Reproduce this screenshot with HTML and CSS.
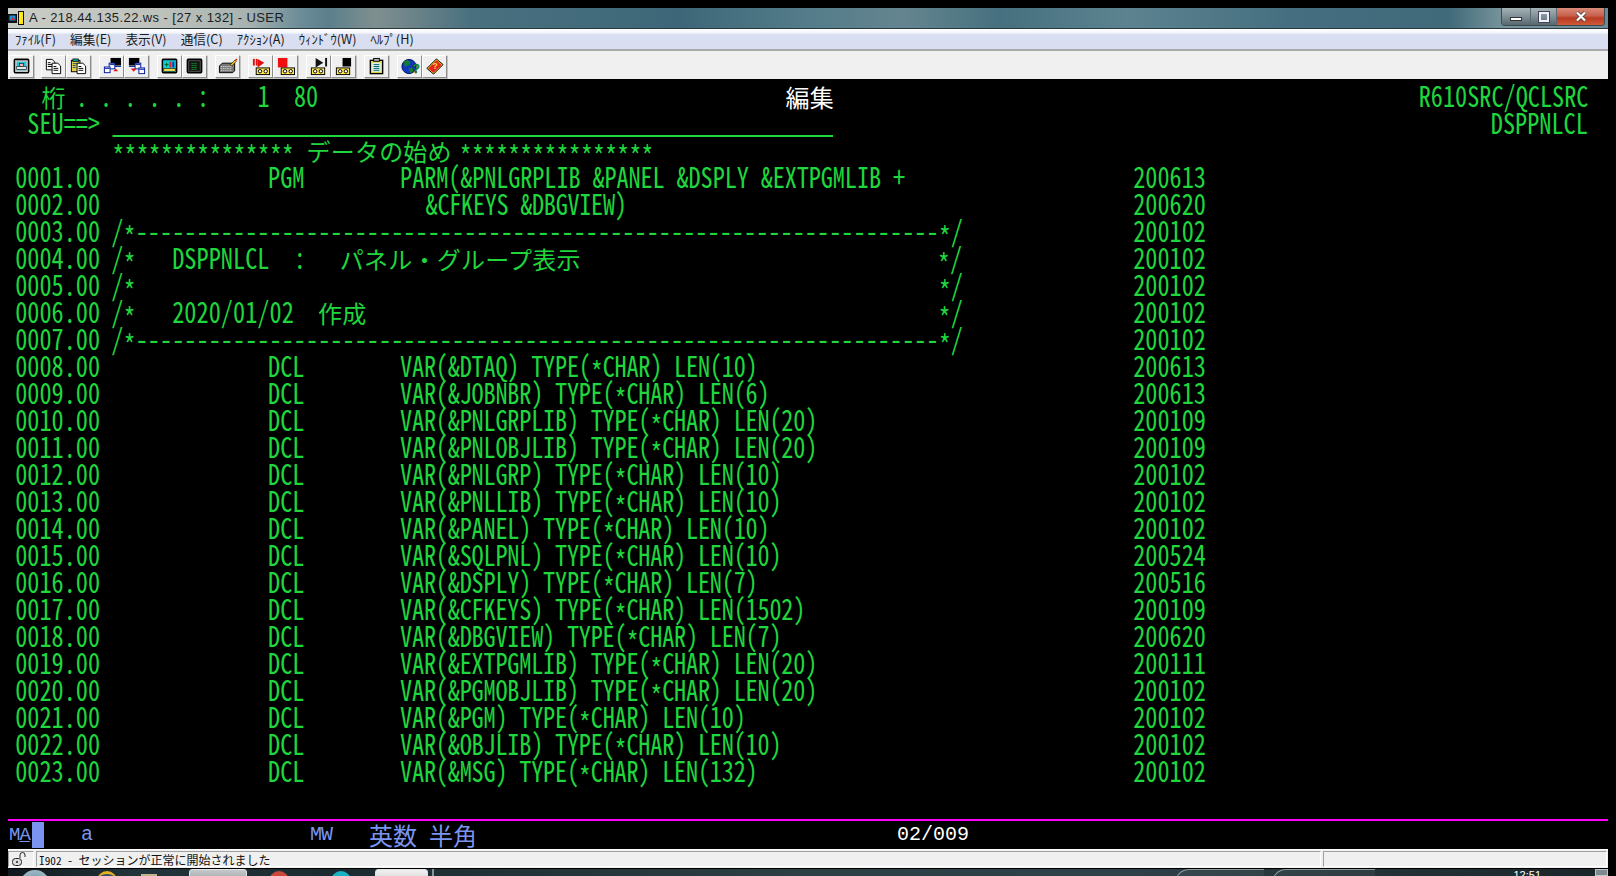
FILE: index.html
```html
<!DOCTYPE html>
<html lang="ja">
<head>
<meta charset="utf-8">
<title>A - 218.44.135.22.ws - [27 x 132] - USER</title>
<link rel="stylesheet" href="styles.css">
</head>
<body>
<svg class="defs" width="0" height="0">
  <defs>
    <g id="tape">
      <rect x="6.500" y="11.500" width="14" height="7" fill="#ffe94a" stroke="#000"/>
      <circle cx="10.500" cy="15" r="1.800" fill="#fff" stroke="#000"/>
      <circle cx="16.500" cy="15" r="1.800" fill="#fff" stroke="#000"/>
    </g>
    <g id="doc">
      <path d="M.5.5h6l3 3v8H.5z" fill="#fff" stroke="#000"/>
      <path d="M2 4h3M2 6h5M2 8h5" stroke="#000" fill="none"/>
    </g>
    <g id="win">
      <rect x=".5" y=".5" width="6" height="6" fill="#fff" stroke="#00189c"/>
      <path d="M1 2h5" stroke="#00189c"/>
    </g>
  </defs>
</svg>
<div class="window">
  <header class="titlebar">
    <svg class="app-icon" width="18" height="18" viewBox="0 0 18 18"><rect x="0" y="5" width="9" height="9" fill="#111"/><rect x="1.500" y="6.500" width="6" height="5" fill="#1c8fd8"/><path d="M3 11l2-3 2 3z" fill="#e02020"/><rect x="10" y="2" width="6" height="14" fill="#111"/><rect x="11" y="3" width="4" height="12" fill="#ffe81f"/></svg>
    <span class="title-text">A - 218.44.135.22.ws - [27 x 132] - USER</span>
    <div class="caption">
      <span class="cap cap-min"><i class="min-glyph"></i></span>
      <span class="cap cap-max"><i class="max-glyph"></i></span>
      <span class="cap cap-close">
        <svg width="14" height="11" viewBox="0 0 14 11"><path d="M3 1.500l8 8M11 1.500l-8 8" stroke="#333" stroke-width="3.600" fill="none"/><path d="M3 1.500l8 8M11 1.500l-8 8" stroke="#fff" stroke-width="2.400" fill="none"/></svg>
      </span>
    </div>
  </header>
  <nav class="menubar">
    <span class="menu-item">ﾌｧｲﾙ(F)</span>
    <span class="menu-item">編集(E)</span>
    <span class="menu-item">表示(V)</span>
    <span class="menu-item">通信(C)</span>
    <span class="menu-item">ｱｸｼｮﾝ(A)</span>
    <span class="menu-item">ｳｨﾝﾄﾞｳ(W)</span>
    <span class="menu-item">ﾍﾙﾌﾟ(H)</span>
  </nav>
  <div class="toolbar">
    <div class="tool-group tool-first">
      <button class="tool"><svg viewBox="0 0 22 20"><rect x="3.500" y="2.500" width="15" height="14" rx="1" fill="#c8c8c8" stroke="#000" stroke-width="1.600"/><rect x="6" y="5" width="10" height="9" fill="#14c8d8"/><rect x="9" y="7" width="4" height="3" fill="#f8b0c0" stroke="#000" stroke-width=".6"/><rect x="6" y="10" width="10" height="3" fill="#e8e8e8" stroke="#000" stroke-width=".6"/></svg></button>
    </div>
    <div class="tool-group">
      <button class="tool"><svg viewBox="0 0 22 20"><use href="#doc" x="3" y="2"/><use href="#doc" x="9" y="6"/></svg></button>
      <button class="tool"><svg viewBox="0 0 22 20"><rect x="3.500" y="3.500" width="9" height="12" fill="#e8d04a" stroke="#000"/><rect x="5" y="2" width="6" height="3" fill="#0a8a8a" stroke="#000" stroke-width=".6"/><path d="M5 7h6M5 9h3M5 11h3" stroke="#0a5a8a"/><use href="#doc" x="9" y="6"/></svg></button>
    </div>
    <div class="tool-group">
      <button class="tool"><svg viewBox="0 0 22 20"><rect x="10" y="1" width="11" height="8" fill="#000"/><path d="M10 10h11" stroke="#1030a0"/><use href="#win" x="8" y="6"/><use href="#win" x="3" y="10"/><path d="M13 15h5l-2.500-3z" fill="#e81010"/></svg></button>
      <button class="tool"><svg viewBox="0 0 22 20"><rect x="3" y="1" width="11" height="8" fill="#000"/><path d="M3 10h11" stroke="#1030a0"/><use href="#win" x="9" y="6"/><use href="#win" x="13" y="11"/><path d="M5 12h6l-3 3.500z" fill="#e81010"/></svg></button>
    </div>
    <div class="tool-group">
      <button class="tool"><svg viewBox="0 0 22 20"><rect x="3.500" y="2.500" width="15" height="14" rx="1" fill="#14c8d8" stroke="#000" stroke-width="1.600"/><path d="M6 8h4M8 6v4" stroke="#006000"/><rect x="11" y="5" width="2" height="6" fill="#e02020"/><rect x="14" y="5" width="2" height="6" fill="#1030c0"/><rect x="5" y="12" width="12" height="3" fill="#f0e050" stroke="#000" stroke-width=".6"/></svg></button>
      <button class="tool"><svg viewBox="0 0 22 20"><rect x="3.500" y="2.500" width="15" height="14" rx="1" fill="#111" stroke="#000" stroke-width="1.600"/><rect x="5" y="4" width="12" height="11" fill="#101810" stroke="#777" stroke-width=".6"/><path d="M8 7h6M8 9h6M8 11h6M8 13h6" stroke="#20d040" stroke-dasharray="1 1"/></svg></button>
    </div>
    <div class="tool-group">
      <button class="tool"><svg viewBox="0 0 22 20"><path d="M2.500 9.500l3-3h13v8l-2 2h-14z" fill="#777" stroke="#000"/><path d="M4 10h12M4 12h12M4 14h11" stroke="#eee" stroke-dasharray="1 1"/><path d="M14 8l5-5 1.500 1.500-5 5z" fill="#e8c020" stroke="#000" stroke-width=".6"/><path d="M19 3l1.500-1.500 1 1L20 4z" fill="#e02020"/></svg></button>
    </div>
    <div class="tool-group">
      <button class="tool"><svg viewBox="0 0 22 20"><rect x="3" y="2" width="2" height="7" fill="#e01010"/><rect x="6" y="2" width="2" height="7" fill="#e01010"/><path d="M8 2l7 4-7 5z" fill="#e01010"/><use href="#tape"/></svg></button>
      <button class="tool"><svg viewBox="0 0 22 20"><rect x="3" y="1" width="10" height="10" fill="#f01010"/><use href="#tape"/></svg></button>
    </div>
    <div class="tool-group">
      <button class="tool"><svg viewBox="0 0 22 20"><path d="M8 1l8 5-8 5z" fill="#111"/><rect x="18" y="1" width="2" height="9" fill="#111"/><use href="#tape" x="-3"/></svg></button>
      <button class="tool"><svg viewBox="0 0 22 20"><rect x="10" y="1" width="9" height="9" fill="#000"/><use href="#tape" x="-3"/></svg></button>
    </div>
    <div class="tool-group">
      <button class="tool"><svg viewBox="0 0 22 20"><rect x="4.500" y="3.500" width="13" height="14" fill="#e8d84a" stroke="#000" stroke-width="1.400"/><rect x="8" y="1.500" width="6" height="3" fill="#b0b0b0" stroke="#000"/><rect x="6.500" y="6" width="9" height="9.500" fill="#d8f0f0"/><path d="M8 8h6M8 10h6M8 12h6M8 14h6" stroke="#006070"/></svg></button>
    </div>
    <div class="tool-group">
      <button class="tool"><svg viewBox="0 0 22 20"><circle cx="10.500" cy="10" r="7.500" fill="#1038c0" stroke="#001060"/><path d="M5 5l4-2 3 3-2 3-4 1zM10 12l4-1 1 4-3 2z" fill="#108030"/><text class="glyph-q" x="14" y="17">?</text></svg></button>
      <button class="tool"><svg viewBox="0 0 22 20"><path d="M3 12L13 2l7 6-10 10z" fill="#f0d020" stroke="#000"/><path d="M4.500 12L13 3.500l5.500 5L10 16.500z" fill="#e82020"/><text class="glyph-b" x="9" y="13">?</text></svg></button>
    </div>
  </div>

  <main class="terminal">
    <div class="cells">
      <div class="row">  <span class="j n2"><span class="j-in">桁</span></span> . . . . . :    1  80                                       <span class="j n4 white"><span class="j-in">編集</span></span>                                                R610SRC/QCLSRC</div>
      <div class="row"> SEU==&gt; <span class="field"></span>                                                      DSPPNLCL</div>
      <div class="row">        <span class="ast">***************</span> <span class="j n12"><span class="j-in">データの始め</span></span> <span class="ast">****************</span></div>

      <div class="row"><span class="seq">0001.00</span><span class="src"><span class="cmd">PGM</span><span class="stmt stmt-parm">PARM(&amp;PNLGRPLIB &amp;PANEL &amp;DSPLY &amp;EXTPGMLIB +</span></span><span>200613</span></div>
      <div class="row"><span class="seq">0002.00</span><span class="src"><span class="stmt stmt-cont">&amp;CFKEYS &amp;DBGVIEW)</span></span><span>200620</span></div>
      <div class="row"><span class="seq">0003.00</span><span class="src frame">/<span class="ast">*</span>------------------------------------------------------------------<span class="ast">*</span>/</span><span>200102</span></div>
      <div class="row"><span class="seq">0004.00</span><span class="src frame">/<span class="ast">*</span>   DSPPNLCL  :   <span class="j n20"><span class="j-in">パネル・グループ表示</span></span>                             <span class="ast">*</span>/</span><span>200102</span></div>
      <div class="row"><span class="seq">0005.00</span><span class="src frame">/<span class="ast">*</span>                                                                  <span class="ast">*</span>/</span><span>200102</span></div>
      <div class="row"><span class="seq">0006.00</span><span class="src frame">/<span class="ast">*</span>   2020/01/02  <span class="j n4"><span class="j-in">作成</span></span>                                               <span class="ast">*</span>/</span><span>200102</span></div>
      <div class="row"><span class="seq">0007.00</span><span class="src frame">/<span class="ast">*</span>------------------------------------------------------------------<span class="ast">*</span>/</span><span>200102</span></div>
      <div class="row"><span class="seq">0008.00</span><span class="src"><span class="cmd">DCL</span><span class="stmt">VAR(&amp;DTAQ) TYPE(<span class="ast">*</span>CHAR) LEN(10)</span></span><span>200613</span></div>
      <div class="row"><span class="seq">0009.00</span><span class="src"><span class="cmd">DCL</span><span class="stmt">VAR(&amp;JOBNBR) TYPE(<span class="ast">*</span>CHAR) LEN(6)</span></span><span>200613</span></div>
      <div class="row"><span class="seq">0010.00</span><span class="src"><span class="cmd">DCL</span><span class="stmt">VAR(&amp;PNLGRPLIB) TYPE(<span class="ast">*</span>CHAR) LEN(20)</span></span><span>200109</span></div>
      <div class="row"><span class="seq">0011.00</span><span class="src"><span class="cmd">DCL</span><span class="stmt">VAR(&amp;PNLOBJLIB) TYPE(<span class="ast">*</span>CHAR) LEN(20)</span></span><span>200109</span></div>
      <div class="row"><span class="seq">0012.00</span><span class="src"><span class="cmd">DCL</span><span class="stmt">VAR(&amp;PNLGRP) TYPE(<span class="ast">*</span>CHAR) LEN(10)</span></span><span>200102</span></div>
      <div class="row"><span class="seq">0013.00</span><span class="src"><span class="cmd">DCL</span><span class="stmt">VAR(&amp;PNLLIB) TYPE(<span class="ast">*</span>CHAR) LEN(10)</span></span><span>200102</span></div>
      <div class="row"><span class="seq">0014.00</span><span class="src"><span class="cmd">DCL</span><span class="stmt">VAR(&amp;PANEL) TYPE(<span class="ast">*</span>CHAR) LEN(10)</span></span><span>200102</span></div>
      <div class="row"><span class="seq">0015.00</span><span class="src"><span class="cmd">DCL</span><span class="stmt">VAR(&amp;SQLPNL) TYPE(<span class="ast">*</span>CHAR) LEN(10)</span></span><span>200524</span></div>
      <div class="row"><span class="seq">0016.00</span><span class="src"><span class="cmd">DCL</span><span class="stmt">VAR(&amp;DSPLY) TYPE(<span class="ast">*</span>CHAR) LEN(7)</span></span><span>200516</span></div>
      <div class="row"><span class="seq">0017.00</span><span class="src"><span class="cmd">DCL</span><span class="stmt">VAR(&amp;CFKEYS) TYPE(<span class="ast">*</span>CHAR) LEN(1502)</span></span><span>200109</span></div>
      <div class="row"><span class="seq">0018.00</span><span class="src"><span class="cmd">DCL</span><span class="stmt">VAR(&amp;DBGVIEW) TYPE(<span class="ast">*</span>CHAR) LEN(7)</span></span><span>200620</span></div>
      <div class="row"><span class="seq">0019.00</span><span class="src"><span class="cmd">DCL</span><span class="stmt">VAR(&amp;EXTPGMLIB) TYPE(<span class="ast">*</span>CHAR) LEN(20)</span></span><span>200111</span></div>
      <div class="row"><span class="seq">0020.00</span><span class="src"><span class="cmd">DCL</span><span class="stmt">VAR(&amp;PGMOBJLIB) TYPE(<span class="ast">*</span>CHAR) LEN(20)</span></span><span>200102</span></div>
      <div class="row"><span class="seq">0021.00</span><span class="src"><span class="cmd">DCL</span><span class="stmt">VAR(&amp;PGM) TYPE(<span class="ast">*</span>CHAR) LEN(10)</span></span><span>200102</span></div>
      <div class="row"><span class="seq">0022.00</span><span class="src"><span class="cmd">DCL</span><span class="stmt">VAR(&amp;OBJLIB) TYPE(<span class="ast">*</span>CHAR) LEN(10)</span></span><span>200102</span></div>
      <div class="row"><span class="seq">0023.00</span><span class="src"><span class="cmd">DCL</span><span class="stmt">VAR(&amp;MSG) TYPE(<span class="ast">*</span>CHAR) LEN(132)</span></span><span>200102</span></div>
    </div>
    <div class="oia">
      <span class="oia-ma">M<u>A</u></span><span class="oia-cursor"></span>
      <span class="oia-a">a</span>
      <span class="oia-mw">MW</span>
      <span class="oia-jp">英数</span>
      <span class="oia-jp oia-jp2">半角</span>
      <span class="oia-pos">02/009</span>
    </div>
  </main>

  <footer class="statusbar">
    <span class="pane pane-icon"><svg width="18" height="15" viewBox="0 0 18 15"><rect x="1.500" y="6.500" width="9" height="7" rx="3" fill="#ddd" stroke="#222"/><circle cx="6" cy="10" r="1" fill="#222"/><path d="M9 6V3a2.500 2.500 0 0 1 5 0v2" stroke="#222" fill="none"/></svg></span>
    <span class="pane pane-msg"><span class="hw">I902 - </span>セッションが正常に開始されました</span>
    <span class="pane pane-end"></span>
  </footer>

  <div class="taskbar">
    <span class="orb"></span>
    <span class="tb-ico tb-gold"></span>
    <span class="tb-ico tb-beige"></span>
    <span class="tb-btn tb-btn1"></span>
    <span class="tb-ico tb-red"></span>
    <span class="tb-ico tb-cyan"></span>
    <span class="tb-btn tb-btn2"></span>
    <span class="tb-grip"></span>
    <span class="tb-arc tb-arc1"></span>
    <span class="tb-arc tb-arc2"></span>
    <span class="tb-clock">12:51</span>
    <span class="tb-show"></span>
  </div>
</div>
</body>
</html>
```

FILE: styles.css
```css
* { box-sizing: border-box; }
html, body { margin: 0; height: 100%; background: #000; overflow: hidden; }
body { padding: 8px 8px 0; }
.defs { position: absolute; }

.window { width: 1600px; height: 868px; display: flex; flex-direction: column; overflow: hidden; }

/* title bar */
.titlebar {
  height: 21px; display: flex; align-items: center; flex: none;
  background: linear-gradient(90deg, #c9cbc5 0, #bfc3bd 9%, #a7b2b0 15%, #6f8f99 18%, #5b7f8c 20%, #7f8f8f 23%, #49707f 29%, #3d6778 42%, #547c8a 50%, #64858f 56%, #46707f 62%, #5d8390 70%, #456f80 80%, #40697a 90%, #78959c 93.500%, #6c8a93 100%);
  border-bottom: 1px solid #2c3a40;
}
.app-icon { flex: none; }
.title-text { margin-left: 3px; font: 13px/20px "Liberation Sans", sans-serif; color: #1c1c1c; letter-spacing: .42px; }
.caption { margin-left: auto; margin-right: 3px; align-self: flex-start; display: flex; height: 18px; border: 1px solid #3a4a50; border-top: 0; border-radius: 0 0 4px 4px; overflow: hidden; }
.cap { display: flex; align-items: center; justify-content: center; border-right: 1px solid #5d6b70; }
.cap-min { width: 29px; background: linear-gradient(#a5b2b5, #7f9096 50%, #55686e); }
.cap-max { width: 26px; background: linear-gradient(#a5b2b5, #7f9096 50%, #55686e); }
.cap-close { width: 47px; border: 0; background: linear-gradient(#d88a78, #c8604c 45%, #b83a22 60%, #d05a38); }
.min-glyph { display: block; width: 12px; height: 4px; margin-top: 5px; background: #fff; border: 1px solid #333; }
.max-glyph { display: block; width: 10px; height: 10px; border: 2px solid #eef; outline: 1px solid #445; }

/* menu */
.menubar {
  height: 22px; flex: none; display: flex; padding-left: 7px; align-items: center;
  background: linear-gradient(#fff 0, #f4f6fb 18%, #d9dff0 28%, #d9dff0 100%);
  border-bottom: 2px solid #a9a9a9;
  font: 12.700px/20px "Noto Sans CJK JP", "Liberation Sans", sans-serif; color: #1a1a1a;
}
.menu-item { margin-right: 14px; }

/* toolbar */
.toolbar { height: 28px; flex: none; background: #f0f0f0; display: flex; padding: 4px 0 0 1px; gap: 8px; }
.tool-group { display: flex; }
.tool-first { margin-right: -1px; }
.tool {
  width: 25px; height: 23px; padding: 1px; margin: 0; display: block;
  background: #f0f0f0;
  border: 1px solid; border-color: #fff #8c8c8c #8c8c8c #fff;
  box-shadow: 1px 1px 0 #c4c4c4;
}
.tool svg { display: block; width: 21px; height: 19px; }
.glyph-q { font: bold 13px "Liberation Sans", sans-serif; fill: #10b040; stroke: #003000; stroke-width: .4px; }
.glyph-b { font: bold 9px "Liberation Sans", sans-serif; fill: #ffe040; }

/* terminal: half-width glyphs squeezed to the 12.12px cell of the emulator */
.terminal { height: 770px; flex: none; background: #000; display: flex; flex-direction: column; overflow: hidden; }
.cells {
  height: 740px; flex: none; padding: 2px 0 0 8.600px;
  width: 1914px;
  transform: scaleX(.8359); transform-origin: 0 0;
  font: 29px/27px "Noto Sans CJK JP", sans-serif; font-feature-settings: "hwid" 1; color: #1fd63d;
}
.row { height: 27px; white-space: pre; }
.seq { display: inline-block; width: 4em; }
.src { display: inline-block; width: calc(42em + 3.500px); }
.cmd { display: inline-block; margin-left: calc(6.5em - 2px); width: 158px; }
.stmt { display: inline-block; letter-spacing: -.25px; }
.stmt-parm { letter-spacing: -.12px; }
.stmt-cont { margin-left: calc(13em - 2px); letter-spacing: -.36px; }
.frame { letter-spacing: .055px; margin-left: -1px; margin-right: 1px; }
.ast { vertical-align: -6px; }
.j { display: inline-block; vertical-align: top; height: 27px; letter-spacing: 0; }
.n2 { width: 1em; margin-left: 2.400px; margin-right: -2.400px; }
.n4 { width: 2em; }
.n12 { width: 6em; margin-right: -5px; }
.n20 { width: 10em; margin-left: -3.500px; margin-right: 3.500px; }
.j-in {
  display: inline-block; transform: scaleX(1.1963); transform-origin: 0 0;
  font: 24px/27px "Noto Sans CJK JP", sans-serif; font-feature-settings: normal; letter-spacing: .24px;
}
.white { color: #fff; font-weight: bold; margin-left: -6.200px; margin-right: 3.200px; }
.field { display: inline-block; width: 29.75em; margin-right: 3.600px; height: 29px; vertical-align: top; border-bottom: 2px solid #1fd63d; }

/* operator info line */
.oia {
  flex: 1; display: flex; align-items: center; white-space: pre;
  border-top: 2px solid #ff00ff; padding-left: 1px;
  font: 20px/26px "Liberation Mono", monospace; color: #7a94f0;
}
.oia-ma { width: 23px; font-size: 19px; letter-spacing: -1px; }
.oia-ma u { text-underline-offset: 1px; }
.oia-cursor { width: 12px; height: 26px; background: #7a94f0; }
.oia-a { margin-left: 37px; width: 229px; }
.oia-mw { width: 59px; letter-spacing: -1px; }
.oia-jp { font: 24px/26px "Noto Sans CJK JP", sans-serif; width: 48px; }
.oia-jp2 { margin-left: 12px; }
.oia-pos { margin-left: 420px; color: #fff; }

/* status bar */
.statusbar { height: 19px; flex: none; background: #f0f0f0; border-top: 1px solid #fff; display: flex; gap: 2px; padding: 1px 1px 0 0; font: 12px/15px "Noto Sans CJK JP", "Liberation Sans", sans-serif; color: #111; }
.pane { height: 16px; border: 1px solid; border-color: #a0a0a0 #fff #fff #a0a0a0; display: block; overflow: hidden; }
.pane-icon { width: 26px; padding-left: 2px; }
.pane-msg { width: 1285px; padding-left: 2px; white-space: pre; }
.hw { font-size: 11.250px; font-feature-settings: "hwid" 1; }
.pane-end { flex: 1; }

/* task bar */
.taskbar {
  height: 8px; flex: none; display: flex; overflow: hidden;
  background: linear-gradient(90deg, #10181c, #22353c 8%, #1a2a30 20%, #2c3f45 50%, #2e4048 70%, #1a2529 100%);
  border-top: 1px solid #000;
}
.orb { width: 30px; height: 30px; margin: 1px 0 0 12px; border-radius: 50%; background: radial-gradient(#5c8aa8, #9db8c4 70%, #d8e4e8); flex: none; }
.tb-ico { width: 20px; height: 20px; border-radius: 50%; flex: none; margin-top: 2px; }
.tb-gold { margin-left: 47px; border-top: 3px solid #e8b020; background: #30506a; }
.tb-beige { width: 16px; margin-left: 24px; margin-top: 5px; border-radius: 0; background: #c4b48c; }
.tb-btn { height: 20px; flex: none; background: linear-gradient(#c4c8ca, #8b9094); border: 1px solid #dfe3e5; border-radius: 3px; }
.tb-btn1 { width: 58px; margin-left: 32px; }
.tb-red { margin-left: 22px; background: #c8483c; }
.tb-cyan { margin-left: 42px; background: #18b4c4; }
.tb-btn2 { width: 53px; margin-left: 24px; background: linear-gradient(#f0f0f0, #c8c8c8); }
.tb-grip { width: 2px; margin-left: 4px; background: #8a9498; flex: none; }
.tb-arc { flex: none; height: 20px; border: 1px solid #8a9aa0; border-right: 0; border-radius: 14px 0 0 0; background: rgba(255, 255, 255, .05); }
.tb-arc1 { width: 89px; margin-left: 741px; }
.tb-arc2 { width: 103px; margin-left: 8px; }
.tb-clock { margin-left: auto; margin-right: 54px; font: 11px/12px "Liberation Sans", sans-serif; color: #fff; }
.tb-show { width: 13px; flex: none; background: #7d8a8e; border: 1px solid #c0c8cc; }
```
